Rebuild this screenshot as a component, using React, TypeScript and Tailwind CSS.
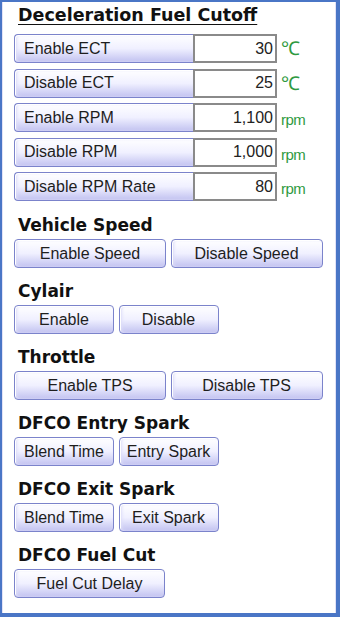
const btn =
  "h-[29px] rounded-[4px] border border-[#7b83cb] bg-gradient-to-b from-[#ffffff] via-[#f0f0ff] to-[#c2c2f0] text-[16px] leading-none text-[#1e1e1e] shadow-[inset_1px_1px_0_#ffffff,inset_2px_0_3px_#dcdcf8]";

const rows = [
  { label: "Enable ECT", value: "30", unit: "°C" },
  { label: "Disable ECT", value: "25", unit: "°C" },
  { label: "Enable RPM", value: "1,100", unit: "rpm" },
  { label: "Disable RPM", value: "1,000", unit: "rpm" },
  { label: "Disable RPM Rate", value: "80", unit: "rpm" },
];

function Heading({ children }: { children: React.ReactNode }) {
  return (
    <h2 className="mt-[13px] pl-[4px] text-[17px] leading-[20px] font-bold text-[#111] font-['DejaVu_Sans',sans-serif]">
      {children}
    </h2>
  );
}

function ButtonRow({ items, width }: { items: string[]; width: string }) {
  return (
    <div className="mt-[4px] flex gap-[4.5px]">
      {items.map((t) => (
        <button key={t} className={`${btn} ${width} text-center`}>
          {t}
        </button>
      ))}
    </div>
  );
}

export default function App() {
  return (
    <div className="w-[340px] h-[617px] bg-white border-l-2 border-t-2 border-r-4 border-b-4 border-[#4a76c6] font-['Liberation_Sans',Arial,sans-serif]">
      <div className="h-full border-x border-[#e2e2f6] pl-[11px] pt-[3px]">
        <h1 className="pl-[4px] text-[17.5px] leading-[20px] font-bold text-[#111] underline underline-offset-[3px] font-['DejaVu_Sans',sans-serif]">
          Deceleration Fuel Cutoff
        </h1>

        {/* setpoint rows */}
        <div className="mt-[9px] flex flex-col gap-[5.5px]">
          {rows.map((r) => (
            <div key={r.label} className="flex items-stretch h-[29px]">
              <button className={`${btn} w-[179px] rounded-r-none border-r-0 pl-[9px] text-left`}>
                {r.label}
              </button>
              <div className="w-[84px] border-2 border-[#8a8a8a] bg-white flex items-center justify-end pr-[2px] text-[16px] text-[#222]">
                {r.value}
              </div>
              {r.unit === "°C" ? (
                <span className="ml-[4px] self-center text-[19px] leading-none text-[#2f9a3f]">℃</span>
              ) : (
                <span className="ml-[4px] self-end pb-[5px] text-[15px] leading-none tracking-[-0.5px] text-[#2f9a3f]">rpm</span>
              )}
            </div>
          ))}
        </div>

        <div className="h-[1px]" />
        <Heading>Vehicle Speed</Heading>
        <ButtonRow items={["Enable Speed", "Disable Speed"]} width="w-[152px]" />

        <Heading>Cylair</Heading>
        <ButtonRow items={["Enable", "Disable"]} width="w-[100px]" />

        <Heading>Throttle</Heading>
        <ButtonRow items={["Enable TPS", "Disable TPS"]} width="w-[152px]" />

        <Heading>DFCO Entry Spark</Heading>
        <ButtonRow items={["Blend Time", "Entry Spark"]} width="w-[100px]" />

        <Heading>DFCO Exit Spark</Heading>
        <ButtonRow items={["Blend Time", "Exit Spark"]} width="w-[100px]" />

        <Heading>DFCO Fuel Cut</Heading>
        <ButtonRow items={["Fuel Cut Delay"]} width="w-[151px]" />
      </div>
    </div>
  );
}
